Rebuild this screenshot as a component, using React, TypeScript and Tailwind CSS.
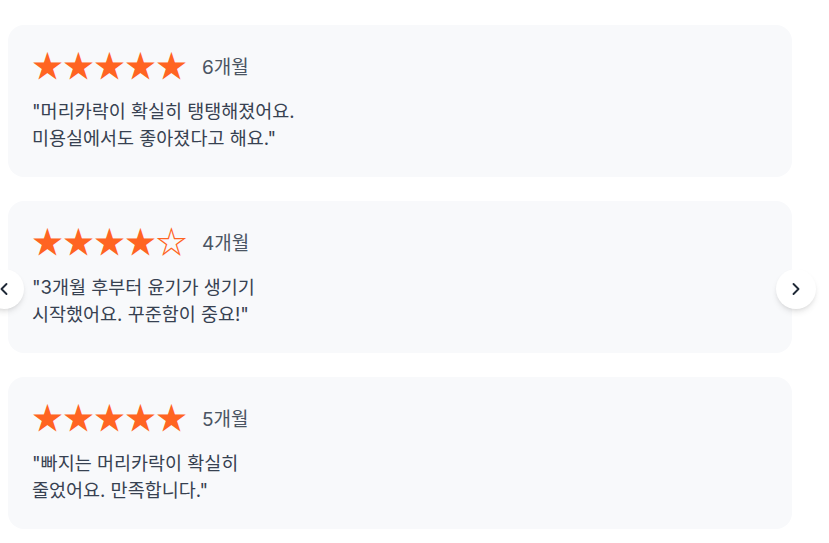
import React from 'react';
import { ChevronLeft, ChevronRight } from 'lucide-react';

interface Review {
  rating: number;
  period: string;
  lines: string[];
}

const reviews: Review[] = [
  { rating: 5, period: '6개월', lines: ['"머리카락이 확실히 탱탱해졌어요.', '미용실에서도 좋아졌다고 해요."'] },
  { rating: 4, period: '4개월', lines: ['"3개월 후부터 윤기가 생기기', '시작했어요. 꾸준함이 중요!"'] },
  { rating: 5, period: '5개월', lines: ['"빠지는 머리카락이 확실히', '줄었어요. 만족합니다."'] },
];

function Stars({ rating }: { rating: number }) {
  return (
    <div className="flex -translate-y-[2px] text-[#ff6422] text-[31px] leading-none font-['Noto_Sans_CJK_KR',sans-serif]">
      {[0, 1, 2, 3, 4].map((i) => (
        <span key={i}>{i < rating ? '★' : '☆'}</span>
      ))}
    </div>
  );
}

function ReviewCard({ review }: { review: Review }) {
  return (
    <div className="h-[152px] rounded-2xl bg-[#f8f9fb] px-6 pt-[22px]">
      <div className="flex h-9 items-center gap-[15px]">
        <Stars rating={review.rating} />
        <span className="translate-y-[3px] text-[19px] text-[#4b5563]">{review.period}</span>
      </div>
      <p className="mt-[15px] text-[18.5px] leading-[27px] text-[#374151]">
        {review.lines[0]}
        <br />
        {review.lines[1]}
      </p>
    </div>
  );
}

export default function App() {
  return (
    <div className="w-[829px] h-[543px] overflow-hidden bg-white pt-[25px] pl-2 font-['Inter','Noto_Sans_CJK_KR',sans-serif]">
      <div className="relative w-[784px]">
        <div className="flex flex-col gap-6">
          {reviews.map((r, i) => (
            <ReviewCard key={i} review={r} />
          ))}
        </div>
        <button className="absolute left-[-24px] top-[244px] flex h-10 w-10 items-center justify-center rounded-full bg-white shadow-md">
          <ChevronLeft className="h-5 w-5 text-[#1f2937]" strokeWidth={2.25} />
        </button>
        <button className="absolute right-[-24px] top-[244px] flex h-10 w-10 items-center justify-center rounded-full bg-white shadow-md">
          <ChevronRight className="h-5 w-5 text-[#1f2937]" strokeWidth={2.25} />
        </button>
      </div>
    </div>
  );
}
